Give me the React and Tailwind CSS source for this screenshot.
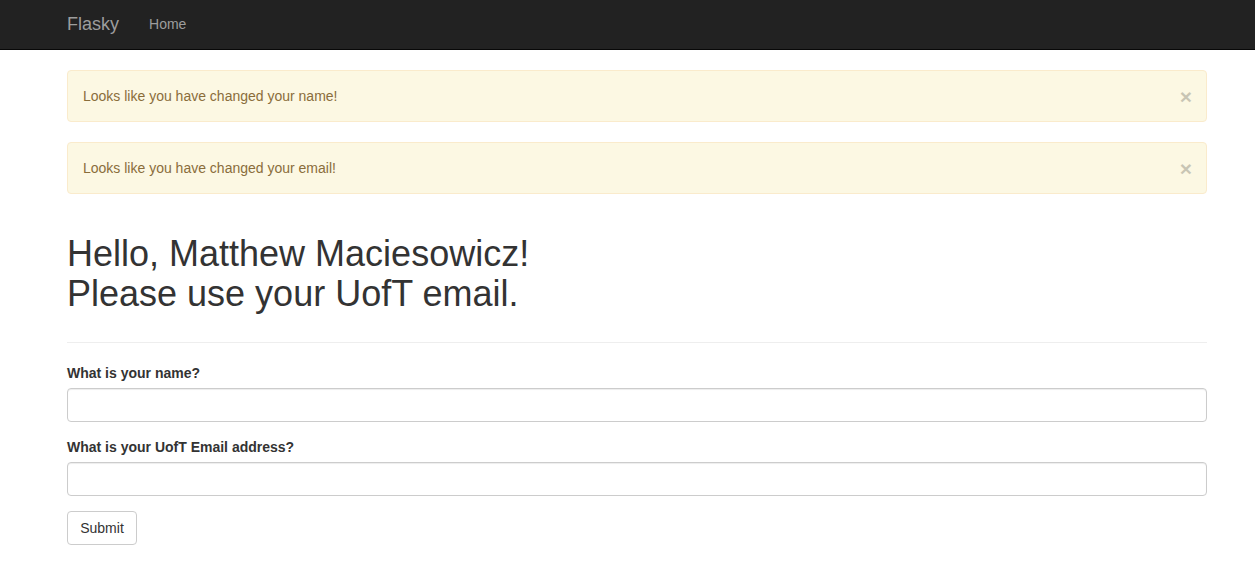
export default function App() {
  const font = { fontFamily: '"Liberation Sans", Arial, Helvetica, sans-serif' };
  return (
    <div className="min-h-[563px] bg-white text-[14px] leading-[20px] text-[#333]" style={font}>
      <nav className="h-[50px] bg-[#222] border-b border-[#080808]">
        <div className="ml-[67px] w-[1140px] flex items-stretch h-full">
          <a className="block text-[18px] leading-[20px] text-[#9d9d9d] pt-[14px] pr-[15px]">Flasky</a>
          <a className="block text-[14px] leading-[20px] text-[#9d9d9d] pt-[14px] px-[15px]">Home</a>
        </div>
      </nav>
      <div className="ml-[67px] w-[1140px] pt-[20px]">
        {["Looks like you have changed your name!", "Looks like you have changed your email!"].map((t) => (
          <div
            key={t}
            className="mb-[20px] flex items-center justify-between h-[52px] pl-[15px] pr-[15px] border border-[#faebcc] bg-[#fcf8e3] text-[#8a6d3b] rounded-[4px]"
          >
            <span>{t}</span>
            <span className="text-[21px] font-bold leading-none text-black opacity-20 mr-[-1px] mt-[1px]">×</span>
          </div>
        ))}
        <div className="mt-[40px] pb-[29px] border-b border-[#eee]">
          <h1 className="text-[36px] leading-[39.6px] font-normal">
            Hello, Matthew Maciesowicz!
            <br />
            Please use your UofT email.
          </h1>
        </div>
        <form className="mt-[20px]">
          <div className="mb-[15px]">
            <label className="block font-bold mb-[5px]">What is your name?</label>
            <input className="block w-full h-[34px] border border-[#ccc] rounded-[4px] px-[12px] shadow-[inset_0_1px_1px_rgba(0,0,0,0.075)]" />
          </div>
          <div className="mb-[15px]">
            <label className="block font-bold mb-[5px]">What is your UofT Email address?</label>
            <input className="block w-full h-[34px] border border-[#ccc] rounded-[4px] px-[12px] shadow-[inset_0_1px_1px_rgba(0,0,0,0.075)]" />
          </div>
          <button type="button" className="h-[34px] w-[70px] border border-[#ccc] rounded-[4px] bg-white text-[#333] text-[14px]">
            Submit
          </button>
        </form>
      </div>
    </div>
  );
}
